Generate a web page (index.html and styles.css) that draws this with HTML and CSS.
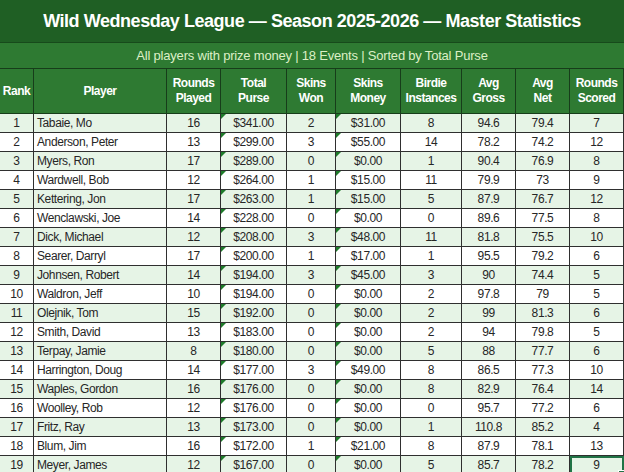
FILE: index.html
```html
<!DOCTYPE html>
<html>
<head>
<meta charset="utf-8">
<link rel="stylesheet" href="styles.css">
</head>
<body>
<div class="sheet">
  <div class="title">Wild Wednesday League — Season 2025-2026 — Master Statistics</div>
  <div class="subtitle">All players with prize money | 18 Events | Sorted by Total Purse</div>
  <table class="stats">
    <colgroup>
      <col class="c-rank"><col class="c-player"><col class="c-rp"><col class="c-tp"><col class="c-sw"><col class="c-sm"><col class="c-bi"><col class="c-ag"><col class="c-an"><col class="c-rs">
    </colgroup>
    <thead>
      <tr>
        <th>Rank</th><th>Player</th><th>Rounds<br>Played</th><th>Total<br>Purse</th><th>Skins<br>Won</th><th>Skins<br>Money</th><th>Birdie<br>Instances</th><th>Avg<br>Gross</th><th>Avg<br>Net</th><th>Rounds<br>Scored</th>
      </tr>
    </thead>
    <tbody>
      <tr><td>1</td><td class="name">Tabaie, Mo</td><td>16</td><td class="flag">$341.00</td><td>2</td><td class="flag">$31.00</td><td>8</td><td>94.6</td><td>79.4</td><td>7</td></tr>
      <tr><td>2</td><td class="name">Anderson, Peter</td><td>13</td><td class="flag">$299.00</td><td>3</td><td class="flag">$55.00</td><td>14</td><td>78.2</td><td>74.2</td><td>12</td></tr>
      <tr><td>3</td><td class="name">Myers, Ron</td><td>17</td><td class="flag">$289.00</td><td>0</td><td class="flag">$0.00</td><td>1</td><td>90.4</td><td>76.9</td><td>8</td></tr>
      <tr><td>4</td><td class="name">Wardwell, Bob</td><td>12</td><td class="flag">$264.00</td><td>1</td><td class="flag">$15.00</td><td>11</td><td>79.9</td><td>73</td><td>9</td></tr>
      <tr><td>5</td><td class="name">Kettering, Jon</td><td>17</td><td class="flag">$263.00</td><td>1</td><td class="flag">$15.00</td><td>5</td><td>87.9</td><td>76.7</td><td>12</td></tr>
      <tr><td>6</td><td class="name">Wenclawski, Joe</td><td>14</td><td class="flag">$228.00</td><td>0</td><td class="flag">$0.00</td><td>0</td><td>89.6</td><td>77.5</td><td>8</td></tr>
      <tr><td>7</td><td class="name">Dick, Michael</td><td>12</td><td class="flag">$208.00</td><td>3</td><td class="flag">$48.00</td><td>11</td><td>81.8</td><td>75.5</td><td>10</td></tr>
      <tr><td>8</td><td class="name">Searer, Darryl</td><td>17</td><td class="flag">$200.00</td><td>1</td><td class="flag">$17.00</td><td>1</td><td>95.5</td><td>79.2</td><td>6</td></tr>
      <tr><td>9</td><td class="name">Johnsen, Robert</td><td>14</td><td class="flag">$194.00</td><td>3</td><td class="flag">$45.00</td><td>3</td><td>90</td><td>74.4</td><td>5</td></tr>
      <tr><td>10</td><td class="name">Waldron, Jeff</td><td>10</td><td class="flag">$194.00</td><td>0</td><td class="flag">$0.00</td><td>2</td><td>97.8</td><td>79</td><td>5</td></tr>
      <tr><td>11</td><td class="name">Olejnik, Tom</td><td>15</td><td class="flag">$192.00</td><td>0</td><td class="flag">$0.00</td><td>2</td><td>99</td><td>81.3</td><td>6</td></tr>
      <tr><td>12</td><td class="name">Smith, David</td><td>13</td><td class="flag">$183.00</td><td>0</td><td class="flag">$0.00</td><td>2</td><td>94</td><td>79.8</td><td>5</td></tr>
      <tr><td>13</td><td class="name">Terpay, Jamie</td><td>8</td><td class="flag">$180.00</td><td>0</td><td class="flag">$0.00</td><td>5</td><td>88</td><td>77.7</td><td>6</td></tr>
      <tr><td>14</td><td class="name">Harrington, Doug</td><td>14</td><td class="flag">$177.00</td><td>3</td><td class="flag">$49.00</td><td>8</td><td>86.5</td><td>77.3</td><td>10</td></tr>
      <tr><td>15</td><td class="name">Waples, Gordon</td><td>16</td><td class="flag">$176.00</td><td>0</td><td class="flag">$0.00</td><td>8</td><td>82.9</td><td>76.4</td><td>14</td></tr>
      <tr><td>16</td><td class="name">Woolley, Rob</td><td>12</td><td class="flag">$176.00</td><td>0</td><td class="flag">$0.00</td><td>0</td><td>95.7</td><td>77.2</td><td>6</td></tr>
      <tr><td>17</td><td class="name">Fritz, Ray</td><td>13</td><td class="flag">$173.00</td><td>0</td><td class="flag">$0.00</td><td>1</td><td>110.8</td><td>85.2</td><td>4</td></tr>
      <tr><td>18</td><td class="name">Blum, Jim</td><td>16</td><td class="flag">$172.00</td><td>1</td><td class="flag">$21.00</td><td>8</td><td>87.9</td><td>78.1</td><td>13</td></tr>
      <tr><td>19</td><td class="name">Meyer, James</td><td>12</td><td class="flag">$167.00</td><td>0</td><td class="flag">$0.00</td><td>5</td><td>85.7</td><td>78.2</td><td class="selected">9</td></tr>
    </tbody>
  </table>
</div>
</body>
</html>
```
FILE: styles.css
```css
html, body {
  margin: 0;
  padding: 0;
  background: #ffffff;
}
body {
  font-family: "Liberation Sans", Arial, sans-serif;
  color: #262626;
  overflow: hidden;
}
.sheet {
  width: 624px;
}
.title {
  height: 43px;
  line-height: 42px;
  background: #1f5f24;
  color: #ffffff;
  font-weight: bold;
  font-size: 18px;
  letter-spacing: -0.45px;
  text-align: center;
  border-bottom: 1px solid #174a1b;
  box-sizing: border-box;
}
.subtitle {
  height: 25px;
  line-height: 25px;
  background: #2e7a32;
  color: #dcefc6;
  font-size: 13px;
  letter-spacing: -0.2px;
  text-align: center;
}
.stats {
  border-collapse: collapse;
  table-layout: fixed;
  width: 624px;
  margin-left: -1px;
}
.c-rank { width: 34px; }
.c-player { width: 133px; }
.c-rp { width: 54px; }
.c-tp { width: 66px; }
.c-sw { width: 49px; }
.c-sm { width: 65px; }
.c-bi { width: 61px; }
.c-ag { width: 54px; }
.c-an { width: 54px; }
.c-rs { width: 54px; }
.stats th {
  background: #2e7a32;
  color: #ffffff;
  font-size: 12px;
  font-weight: bold;
  letter-spacing: -0.5px;
  line-height: 15px;
  height: 44px;
  padding: 0;
  border: 1px solid #173d1a;
  text-align: center;
  vertical-align: middle;
}
.stats td {
  height: 18px;
  padding: 0;
  font-size: 12px;
  letter-spacing: -0.4px;
  line-height: 18px;
  border: 1px solid #2f2f2f;
  text-align: center;
  white-space: nowrap;
  position: relative;
}
.stats tbody tr:nth-child(odd) td {
  background: #e6f4e6;
}
.stats tbody tr:nth-child(even) td {
  background: #ffffff;
}
.stats td.name {
  text-align: left;
  padding-left: 3px;
}
.stats td.flag::before {
  content: "";
  position: absolute;
  left: 0;
  top: 0;
  border-top: 5px solid #1e7b2a;
  border-right: 5px solid transparent;
}
.stats td.selected {
  outline: 2px solid #217346;
  outline-offset: -2px;
}
.stats td.selected::after {
  content: "";
  position: absolute;
  right: -2px;
  bottom: -3px;
  width: 5px;
  height: 5px;
  background: #217346;
  border: 1px solid #fff;
}
```
